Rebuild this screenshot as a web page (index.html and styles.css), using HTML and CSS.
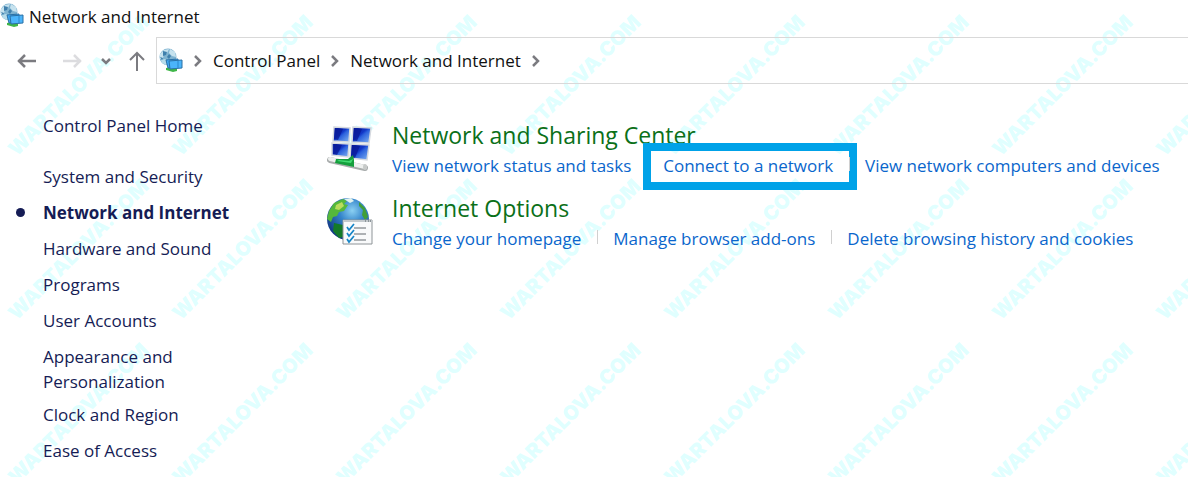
FILE: index.html
```html
<!DOCTYPE html>
<html lang="en">
<head>
    <meta charset="UTF-8">
    <meta name="viewport" content="width=device-width, initial-scale=1.0">
    <title>Network and Internet</title>
    <link rel="stylesheet" href="styles.css">
</head>
<body>
    <!-- Repeating site mark behind the window -->
    <svg class="watermark" aria-hidden="true">
        <defs>
            <pattern id="mark" width="164" height="164" patternUnits="userSpaceOnUse">
                <text class="mark-text" transform="translate(17 157) rotate(-45)">WARTALOVA.COM</text>
            </pattern>
            <symbol id="globe-screens" viewBox="0 0 24 24">
                <circle cx="9" cy="9" r="8.500" fill="#7fb3d0"/>
                <path d="M1 6l4-4 5-1-2 4-3 1-1 4-3 1zM11 1l5 3 1 5-4-1-3-3z" fill="#c6e2ee"/>
                <path d="M2 12l4-1 3 3-2 3-4-2z" fill="#b7dcea"/>
                <path d="M4 3l4 1-1 3-3 1zM10 6l2 2-2 3-2-2zM1 9l3 1-1 2z" fill="#3f7fac"/>
                <path d="M7 20l5-1 6 2v2l-4 1-7-2z" fill="#3fb648"/>
                <path d="M7 12l12-1v8l-10 1z" fill="#3fa9f5" stroke="#2a70a5"/>
                <path d="M10 13l13-1v8l-12 1z" fill="#4bb4fa" stroke="#2a70a5"/>
                <path d="M19 13v7" stroke="#2a86cc"/>
            </symbol>
        </defs>
        <rect width="100%" height="100%" fill="url(#mark)"/>
    </svg>

    <header class="titlebar">
        <svg class="app-icon"><use href="#globe-screens"/></svg>
        <span>Network and Internet</span>
    </header>

    <div class="toolbar">
        <button class="nav-btn" aria-label="Back">
            <svg width="20" height="20" viewBox="0 0 20 20"><path d="M20 10H2M9 4L3 10l6 6"/></svg>
        </button>
        <button class="nav-btn nav-forward" aria-label="Forward" disabled>
            <svg width="20" height="20" viewBox="0 0 20 20"><path d="M1 10h18M12 4l6 6-6 6"/></svg>
        </button>
        <button class="nav-btn nav-recent" aria-label="Recent locations">
            <svg width="10" height="10" viewBox="0 0 10 10"><path d="M1 3l4 4 4-4"/></svg>
        </button>
        <button class="nav-btn nav-up" aria-label="Up">
            <svg width="18" height="20" viewBox="0 0 18 20"><path d="M9 20V2M2 9l7-7 7 7"/></svg>
        </button>
        <nav class="address" aria-label="Address">
            <svg class="app-icon"><use href="#globe-screens"/></svg>
            <svg class="chevron" viewBox="0 0 8 12"><path d="M1 1l5 5-5 5"/></svg>
            <a href="#">Control Panel</a>
            <svg class="chevron" viewBox="0 0 8 12"><path d="M1 1l5 5-5 5"/></svg>
            <a href="#">Network and Internet</a>
            <svg class="chevron" viewBox="0 0 8 12"><path d="M1 1l5 5-5 5"/></svg>
        </nav>
    </div>

    <div class="content">
        <aside class="sidebar">
            <a class="home" href="#">Control Panel Home</a>
            <ul class="categories">
                <li><a href="#">System and Security</a></li>
                <li class="active"><a href="#">Network and Internet</a></li>
                <li><a href="#">Hardware and Sound</a></li>
                <li><a href="#">Programs</a></li>
                <li><a href="#">User Accounts</a></li>
                <li><a href="#">Appearance and Personalization</a></li>
                <li><a href="#">Clock and Region</a></li>
                <li><a href="#">Ease of Access</a></li>
            </ul>
        </aside>

        <main class="groups">
            <section class="group">
                <svg class="group-icon" viewBox="0 0 48 48" aria-hidden="true">
                    <defs>
                        <linearGradient id="screen" x1="0" y1="0" x2="1" y2="1">
                            <stop offset="0" stop-color="#0a1f9c"/>
                            <stop offset="0.45" stop-color="#1237c8"/>
                            <stop offset="0.55" stop-color="#2c62dd"/>
                            <stop offset="1" stop-color="#86b8f2"/>
                        </linearGradient>
                    </defs>
                    <g fill="url(#screen)" stroke="#d5d9df" stroke-width="1.500">
                        <path d="M8 3l16 1-1 14-16-1z"/>
                        <path d="M27 3l18 1-2 15-17-1z"/>
                        <path d="M6 19l17 1-1 13-16-2z"/>
                        <path d="M25 20l18 1-2 15-17-2z"/>
                    </g>
                    <path d="M9 4l8 1-5 11-4-1zM28 4l8 1-5 12-4-1zM8 20l8 1-5 10-4-1zM26 21l8 1-5 12-4-1z" fill="#08148f" opacity="0.65"/>
                    <path d="M4 36l35 8" stroke="#a9adad" stroke-width="6" stroke-linecap="round"/>
                    <path d="M4 35l35 8" stroke="#eef0ef" stroke-width="4" stroke-linecap="round"/>
                    <path d="M10 35l12 0 5-4 1 5v7l-19-4z" fill="#159f3d"/>
                    <path d="M11 37l14 2 2-4-4 2-10-1z" fill="#43dc72"/>
                    <ellipse cx="39" cy="43" rx="2" ry="3" fill="#c7cac9"/>
                </svg>
                <div class="group-body">
                    <h2><a href="#">Network and Sharing Center</a></h2>
                    <ul class="tasks">
                        <li><a href="#">View network status and tasks</a></li>
                        <li class="highlighted"><a href="#">Connect to a network</a></li>
                        <li><a href="#">View network computers and devices</a></li>
                    </ul>
                </div>
            </section>

            <section class="group">
                <svg class="group-icon" viewBox="0 0 48 48" aria-hidden="true">
                    <defs>
                        <radialGradient id="ocean" cx="0.6" cy="0.3" r="0.75">
                            <stop offset="0" stop-color="#8bd0f2"/>
                            <stop offset="0.4" stop-color="#3585cb"/>
                            <stop offset="1" stop-color="#0d2f7c"/>
                        </radialGradient>
                    </defs>
                    <circle cx="22" cy="22" r="21" fill="url(#ocean)"/>
                    <path d="M3 14l5-8 9-4 4 2-3 3 4 1-4 6-5 1-2 4-4 1-2 5-4-3z" fill="#55b83b"/>
                    <path d="M10 8l6-3 2 4-5 4-4-1z" fill="#b9dc5c"/>
                    <path d="M8 26l9 2 2 5-2 7-4 1-6-7z" fill="#147a29"/>
                    <path d="M33 5l6 6 3 9-3 3-3-5 1-5-4-4z" fill="#409e39"/>
                    <path d="M18 2l7-1 3 3-4 2z" fill="#e1f2ef"/>
                    <path d="M17 23h29v24H17z" fill="#f9fafb" stroke="#8e9497"/>
                    <path d="M17 24h29" stroke="#c4cace" stroke-width="2"/>
                    <path d="M39 24h1M42 24h1M44 24h1" stroke="#555e65"/>
                    <path d="M28 31h12M28 37h12M28 43h12" stroke="#62696e"/>
                    <path d="M21 30l2 3 5-6M21 36l2 3 5-6M21 42l2 3 5-6" fill="none" stroke="#1685c7" stroke-width="1.700"/>
                </svg>
                <div class="group-body">
                    <h2><a href="#">Internet Options</a></h2>
                    <ul class="tasks">
                        <li><a href="#">Change your homepage</a></li>
                        <li><a href="#">Manage browser add-ons</a></li>
                        <li><a href="#">Delete browsing history and cookies</a></li>
                    </ul>
                </div>
            </section>
        </main>
    </div>
</body>
</html>
```
FILE: styles.css
```css
* {
    margin: 0;
    padding: 0;
    box-sizing: border-box;
}

body {
    min-height: 100vh;
    background-color: #fff;
    color: #111;
    font-family: 'Segoe UI', 'Open Sans', sans-serif;
    font-size: 17px;
    line-height: 25px;
}

a {
    color: inherit;
    text-decoration: none;
}

ul {
    list-style: none;
}

.watermark {
    position: absolute;
    top: 0;
    left: 0;
    width: 100%;
    height: 100%;
    z-index: -1;
}

.mark-text {
    font-family: Inter, sans-serif;
    font-size: 20px;
    font-weight: 900;
    fill: #e0ffff;
}

.titlebar {
    display: flex;
    align-items: center;
    gap: 5px;
    height: 32px;
}

.app-icon {
    width: 24px;
    height: 26px;
    margin-bottom: 2px;
    flex-shrink: 0;
}

.toolbar {
    display: flex;
    align-items: center;
    padding: 5px 0 0 16px;
}

.nav-btn {
    display: flex;
    align-items: center;
    justify-content: center;
    width: 20px;
    height: 32px;
    border: none;
    background: none;
}

.nav-btn path,
.chevron path {
    fill: none;
    stroke: #7b7b80;
    stroke-width: 2.5;
}

.nav-up path {
    stroke-width: 2;
}

.nav-btn.nav-forward path {
    stroke: #dcdcdf;
}

.nav-forward {
    margin-left: 26px;
}

.nav-recent {
    margin-left: 14px;
}

.nav-up {
    margin: 0 9px 0 11px;
}

.address {
    flex: 1;
    display: flex;
    align-items: center;
    gap: 11px;
    height: 47px;
    padding-left: 2px;
    border: 1px solid #d9d9d9;
    border-right: none;
}

.chevron {
    width: 8px;
    height: 12px;
    flex-shrink: 0;
}

.content {
    display: flex;
    padding: 29px 16px 0 43px;
}

.sidebar {
    width: 283px;
    flex-shrink: 0;
    padding-right: 110px;
    color: #151c55;
}

.home {
    display: block;
    margin-bottom: 26px;
}

.categories {
    display: flex;
    flex-direction: column;
    gap: 8px;
}

.categories li {
    position: relative;
    min-height: 28px;
}

.categories .active {
    font-weight: 700;
    white-space: nowrap;
}

.categories .active::before {
    content: '';
    position: absolute;
    top: 8px;
    left: -27px;
    width: 9px;
    height: 9px;
    border-radius: 50%;
    background-color: #151c55;
}

.groups {
    flex: 1;
    display: flex;
    flex-direction: column;
    gap: 14px;
    padding-top: 6px;
}

.group {
    display: flex;
    gap: 18px;
}

.group-icon {
    width: 48px;
    height: 48px;
    margin-top: 5px;
    flex-shrink: 0;
}

.group h2 {
    color: #0b7019;
    font-size: 23px;
    font-weight: 400;
    line-height: 32px;
}

.tasks {
    display: flex;
    flex-wrap: wrap;
    padding-top: 2px;
    color: #0a66cc;
}

.tasks li {
    position: relative;
}

.tasks li + li {
    margin-left: 32px;
}

/* divider between links */
.tasks li + li::before {
    content: '';
    position: absolute;
    top: 4px;
    left: -16px;
    width: 1px;
    height: 14px;
    background-color: #d0d0d0;
}

.highlighted::after {
    content: '';
    position: absolute;
    inset: -10px -24px -12px -20px;
    border: 8px solid #00a2e8;
    pointer-events: none;
}
```
